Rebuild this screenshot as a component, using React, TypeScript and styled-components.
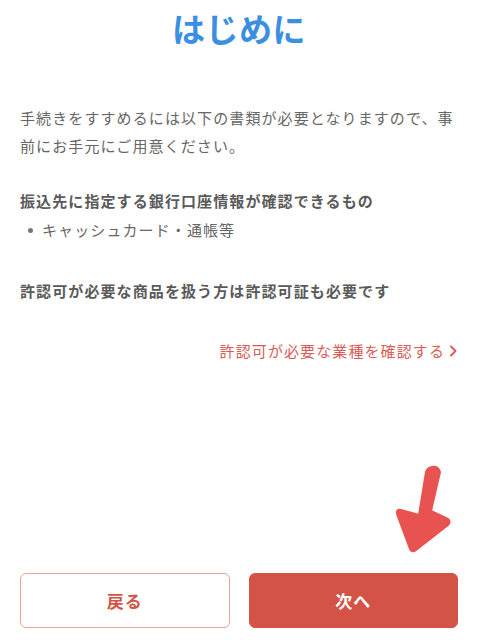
import React from "react";
import styled, { createGlobalStyle } from "styled-components";

const GlobalStyle = createGlobalStyle`
  html, body {
    margin: 0;
    padding: 0;
    background: #ffffff;
  }
  body {
    font-family: "Noto Sans CJK JP", "Noto Sans", sans-serif;
  }
`;

const App = () => {
  return (
    <React.Fragment>
      <GlobalStyle />
      <Page>
        <Title>はじめに</Title>
        <Lead>
          手続きをすすめるには以下の書類が必要となりますので、事前にお手元にご用意ください。
        </Lead>
        <Heading $gap={27}>振込先に指定する銀行口座情報が確認できるもの</Heading>
        <BulletList>
          <BulletItem>キャッシュカード・通帳等</BulletItem>
        </BulletList>
        <Heading $gap={33}>許認可が必要な商品を扱う方は許認可証も必要です</Heading>
        <LinkRow>
          <TextLink href="#">
            許認可が必要な業種を確認する
            <svg width="9" height="12" viewBox="0 0 9 12">
              <path
                d="M2 1.5 L6.5 6 L2 10.5"
                fill="none"
                stroke="currentColor"
                strokeWidth="2"
                strokeLinecap="round"
                strokeLinejoin="round"
              />
            </svg>
          </TextLink>
        </LinkRow>
        <Footer>
          <Button $primary={false}>戻る</Button>
          <Button $primary>次へ</Button>
          <Pointer width="80" height="96" viewBox="0 0 80 96">
            <path
              d="M44 4 Q50 3 52 9 L43 48 L60 56 Q63 59 60 62 L28 87 Q24 90 22 86 L9 51 Q8 46 13 47 L31 52 L38 9 Q39 5 44 4 Z"
              fill="#e85352"
              stroke="#e85352"
              strokeWidth="2"
              strokeLinejoin="round"
            />
          </Pointer>
        </Footer>
      </Page>
    </React.Fragment>
  );
};

export default App;

const Page = styled.div`
  display: flex;
  flex-direction: column;
  height: 640px;
  padding: 0 20px 12px;
  box-sizing: border-box;
`;

const Title = styled.h1`
  margin: 0;
  height: 56px;
  line-height: 56px;
  text-align: center;
  font-size: 33px;
  font-weight: 700;
  letter-spacing: 0.5px;
  color: #3b8fe2;
`;

const Lead = styled.p`
  margin: 48px 0 0;
  font-size: 15px;
  line-height: 28px;
  letter-spacing: 1.1px;
  color: #666666;
`;

const Heading = styled.p<{ $gap: number }>`
  margin: ${(p) => p.$gap}px 0 0;
  font-size: 15px;
  line-height: 28px;
  letter-spacing: 1.1px;
  font-weight: 600;
  color: #5a5a5a;
`;

const BulletList = styled.ul`
  margin: 1px 0 0;
  padding: 0;
  list-style: none;
`;

const BulletItem = styled.li`
  display: flex;
  align-items: center;
  font-size: 15px;
  line-height: 28px;
  letter-spacing: 1.1px;
  color: #666666;

  &::before {
    content: "";
    width: 5px;
    height: 5px;
    border-radius: 50%;
    background: #777777;
    margin: 0 9px 0 8px;
  }
`;

const LinkRow = styled.div`
  display: flex;
  justify-content: flex-end;
  margin-top: 32px;
`;

const TextLink = styled.a`
  display: flex;
  align-items: center;
  gap: 4px;
  font-size: 15px;
  line-height: 28px;
  letter-spacing: 1.1px;
  color: #dc5a55;
  text-decoration: none;
`;

const Footer = styled.div`
  position: relative;
  margin-top: auto;
  display: grid;
  grid-template-columns: 1fr 1fr;
  gap: 19px;
`;

const Button = styled.button<{ $primary: boolean }>`
  height: 55px;
  border-radius: 6px;
  font-family: "Noto Sans CJK JP", sans-serif;
  font-size: 17px;
  font-weight: 700;
  letter-spacing: 1px;
  cursor: pointer;
  border: 1.5px solid ${(p) => (p.$primary ? "#d35446" : "#eba39c")};
  background: ${(p) => (p.$primary ? "#d35446" : "#ffffff")};
  color: ${(p) => (p.$primary ? "#ffffff" : "#d35446")};
`;

const Pointer = styled.svg`
  position: absolute;
  right: -10px;
  bottom: 69px;
`;
